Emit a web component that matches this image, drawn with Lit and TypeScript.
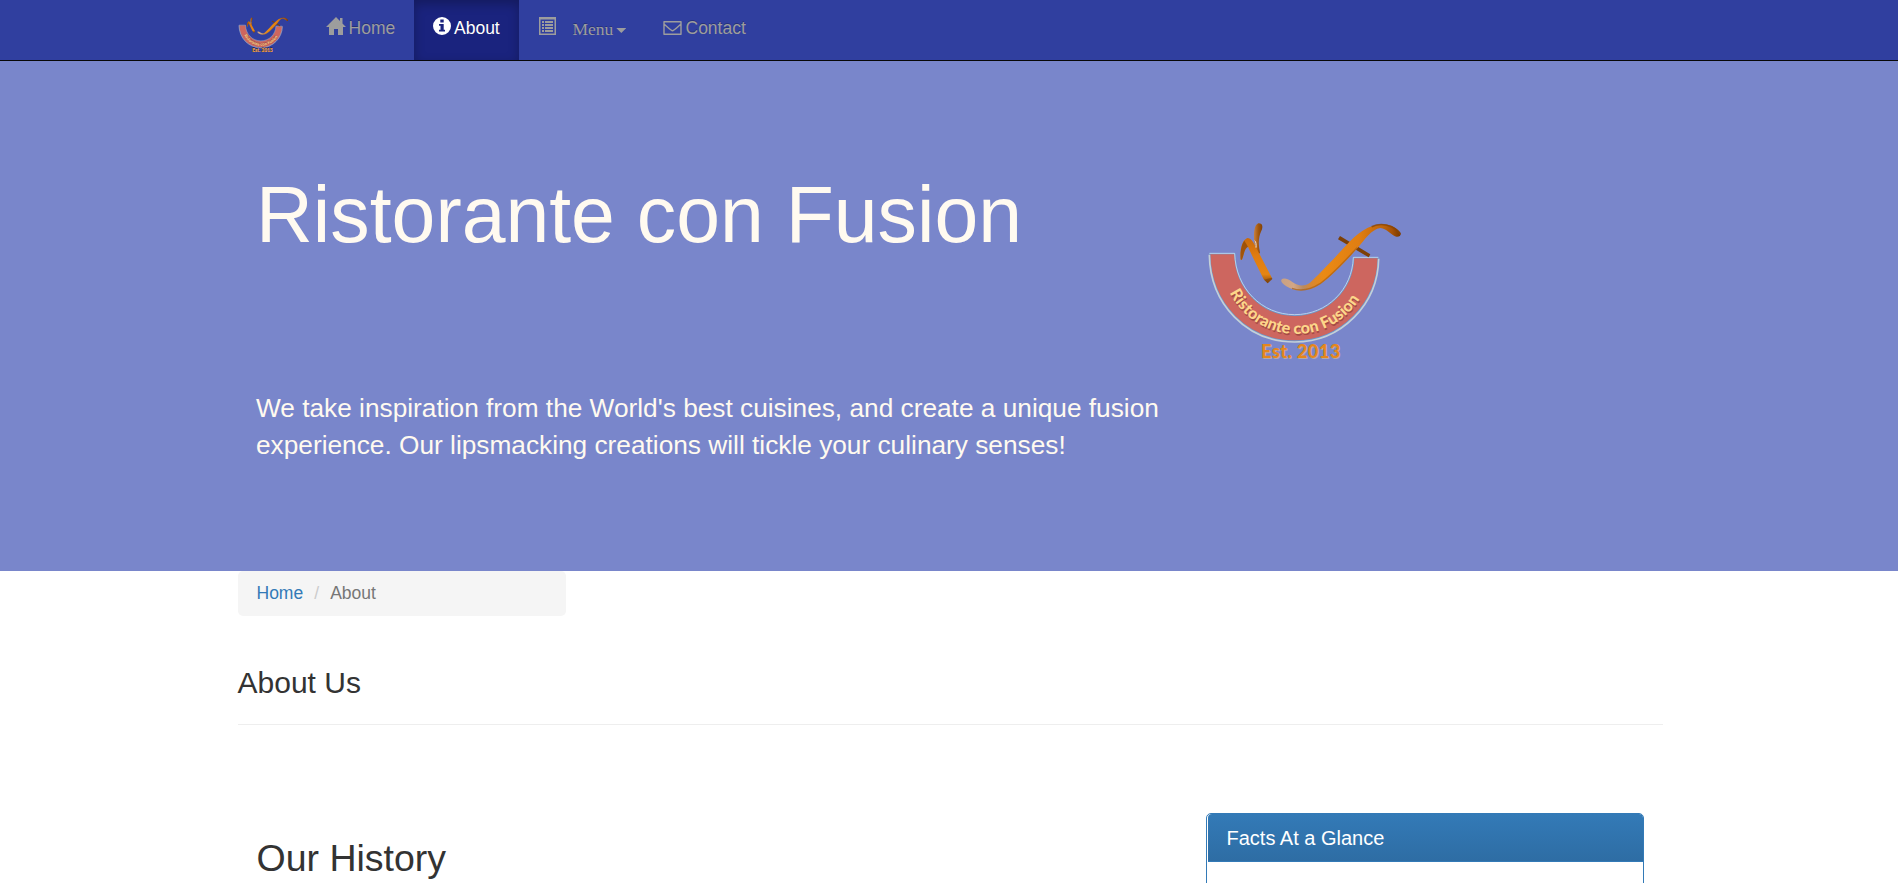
import { LitElement, html, css } from "lit";
import { customElement } from "lit/decorators.js";

@customElement("fusion-logo")
class FusionLogo extends LitElement {
  static styles = css`
    :host { display: block; }
    svg { display: block; width: 100%; height: 100%; }
    .est { font: 900 55px Lato, "Open Sans", sans-serif; }
    .ring { font: 900 48px Lato, "Open Sans", sans-serif; }
  `;
  render() {
    return html`<svg viewBox="0 0 690 480">
      <defs>
        <linearGradient id="gr" x1="0" y1="85" x2="0" y2="220" gradientUnits="userSpaceOnUse">
          <stop offset="0" stop-color="#c96a0c" /><stop offset=".4" stop-color="#e07c10" /><stop offset=".8" stop-color="#e58514" /><stop offset="1" stop-color="#8a4a0b" />
        </linearGradient>
        <linearGradient id="ga" x1="192" y1="0" x2="218" y2="0" gradientUnits="userSpaceOnUse">
          <stop offset="0" stop-color="#c9803c" /><stop offset=".5" stop-color="#a3570d" /><stop offset="1" stop-color="#7e4004" />
        </linearGradient>
        <linearGradient id="gf" x1="275" y1="0" x2="632" y2="0" gradientUnits="userSpaceOnUse">
          <stop offset="0" stop-color="#c9a184" /><stop offset=".1" stop-color="#d3a685" /><stop offset=".18" stop-color="#b98a5f" /><stop offset=".25" stop-color="#d88730" /><stop offset=".35" stop-color="#ea8a14" /><stop offset=".65" stop-color="#e07e12" /><stop offset=".85" stop-color="#bd650c" /><stop offset=".93" stop-color="#a45006" /><stop offset="1" stop-color="#743700" />
        </linearGradient>
        <path id="curve" d="M119 248 A224 224 0 0 0 527 232" />
      </defs>
      <path d="M59 131 H135 C136 235 215 316 314 316 C412 316 488 238 491 143 H565 C562 280 453 393 314 393 C172 393 62 282 59 131Z" fill="#cd665f" stroke="#6a96cc" stroke-width="4" />
      <path d="M58 134 C60 284 172 396 314 396 C455 396 564 282 566 146" fill="none" stroke="#c3d0d8" stroke-width="5" />
      <path d="M58 130 H134 C137 235 215 314 314 314 C412 314 487 238 490 142 H565" fill="none" stroke="#c8ddf2" stroke-width="2.5" />
      <text class="ring" fill="#7b322b" opacity=".5" transform="translate(2 5)"><textPath href="#curve" textLength="474" lengthAdjust="spacing">Ristorante con Fusion</textPath></text>
      <text class="ring" fill="#fdd68a"><textPath href="#curve" textLength="474" lengthAdjust="spacing">Ristorante con Fusion</textPath></text>
      <path d="M196 112 C188 76 192 44 205 40 C216 39 219 48 216 58 C207 78 203 94 210 128 L205 134Z" fill="url(#ga)" />
      <path d="M152 150 C149 120 156 90 172 84 C184 84 191 98 199 114 L247 206 L233 220 L221 208 C205 175 186 138 174 110 C162 116 162 138 155 150Z" fill="url(#gr)" />
      <path d="M174 110 C162 116 162 138 155 150 L152 148 C150 125 155 102 163 92Z" fill="#874509" opacity=".7" />
      <path d="M245 203 L247 207 L233 220 L222 209Z" fill="#6f3907" opacity=".5" />
      <path d="M194 92 C198 94 199 105 198 113" fill="none" stroke="#efe0d8" stroke-width="3" />
      <path d="M450 78 L541 133 L536 142 L444 88Z" fill="#7d4006" />
      <path d="M274 209 C280 202 296 207 308 217 C322 228 342 230 358 220 C378 203 438 139 466 109 C499 71 538 43 577 43 C604 43 623 56 632 69 C633 79 625 83 615 79 C600 71 590 56 571 54 C545 57 524 89 502 115 C470 151 424 200 390 223 C358 246 316 247 289 229 C278 222 272 216 274 209Z" fill="url(#gf)" />
      <path d="M306 235 C335 246 363 238 390 221 C424 196 465 153 501 113" fill="none" stroke="#a95f14" stroke-width="4" opacity=".7" />
      <path d="M545 50 C566 40 585 42 605 50 C619 58 629 67 630 74" fill="none" stroke="#8a4503" stroke-width="5" opacity=".8" />
      <text class="est" x="215" y="448" fill="#b5a9a8" textLength="238">Est. 2013</text>
      <text class="est" x="213" y="445" fill="#e5861c" textLength="238">Est. 2013</text>
    </svg>`;
  }
}

@customElement("app-root")
class AppRoot extends LitElement {
  static styles = css`
    :host { display: block; height: 883px; overflow: hidden; background: #fff; color: #333; font: 17.5px/25px "Liberation Sans", Arial, sans-serif; }
    * { box-sizing: border-box; }
    h1, h2, h3, p, ol { margin: 0; padding: 0; font-weight: 400; list-style: none; }
    a { text-decoration: none; color: inherit; }
    .nav { height: 61px; background: #303f9f; border-bottom: 1px solid #080808; padding-left: 234px; display: flex; color: #9d9d9d; text-shadow: 0 -1px 0 rgba(0,0,0,.25); }
    .brand { width: 73px; padding-top: 14px; }
    .brand fusion-logo { width: 59px; height: 41px; }
    .item { display: flex; padding: 15px 0 0 19px; height: 60px; white-space: nowrap; }
    .item svg { display: block; fill: currentColor; flex: none; }
    .item a { margin: 1px 0 0 2.6px; }
    .home { width: 107px; }
    .about { width: 105px; color: #fff; background: #1a237e; box-shadow: inset 0 4px 11px rgba(0,0,0,.25); }
    .about a { margin-left: 3px; }
    .menu { width: 125px; padding-left: 20px; }
    .menu a { font-family: "Liberation Serif", serif; margin: 2px 0 0 16.5px; }
    .contact a { margin-left: 3.5px; }
    .caret { margin: 13px 0 0 3px; width: 10px; height: 5px; background: currentColor; clip-path: polygon(0 0, 100% 0, 50% 100%); }
    .hero { height: 510px; background: #7986cb; color: floralwhite; padding: 111px 0 0 256px; display: grid; grid-template-columns: 934px 230px; align-content: start; }
    .hero h1 { font-size: 78.75px; line-height: 87px; white-space: nowrap; }
    .hero p { font-size: 26.25px; line-height: 37px; margin-top: 131px; width: 920px; }
    .hero fusion-logo { margin-top: 38px; width: 230px; height: 160px; }
    .page { margin-left: 238px; width: 1425px; }
    .crumbs { width: 328px; height: 45px; background: #f5f5f5; border-radius: 5px; padding: 10px 0 0 18.5px; display: flex; color: #777; }
    .crumbs a { color: #337ab7; }
    .sep { color: #ccc; width: 27px; padding-left: 11px; }
    .title { font-size: 30px; line-height: 33px; margin-top: 50px; padding-bottom: 25px; border-bottom: 1px solid #eee; text-indent: -.5px; }
    .cols { display: flex; justify-content: space-between; margin-top: 88px; padding: 0 19px 0 18.5px; }
    .cols h2 { font-size: 37.5px; line-height: 41px; margin-top: 25px; }
    .panel { width: 438px; height: 300px; border: 1px solid #337ab7; border-radius: 5px; padding-left: 1px; }
    .panel h3 { height: 48px; padding: 12px 0 0 18.5px; color: #fff; font-size: 20px; line-height: 24px; border-radius: 4px 4px 0 0; background: linear-gradient(#337ab7, #2e6da4); border-bottom: 1px solid #337ab7; }
  `;
  render() {
    return html`
      <nav class="nav">
        <a class="brand"><fusion-logo></fusion-logo></a>
        <div class="item home">
          <svg width="20" height="20" viewBox="0 0 20 20"><path d="M10 2 L20 12 H17 V20 H12 V14 H8 V20 H3 V12 H0Z M14 3 H16.5 V8.5 L14 6Z" /></svg>
          <a>Home</a>
        </div>
        <div class="item about">
          <svg width="18" height="20" viewBox="0 0 18 20"><path fill-rule="evenodd" d="M9 2a9 9 0 1 0 0 18A9 9 0 0 0 9 2Z M7.3 4.5h3.4v3H7.3z M6 9h4.7v5.7H12V16.5H6v-1.8h1.5v-4H6z" /></svg>
          <a>About</a>
        </div>
        <div class="item menu">
          <svg width="17" height="20" viewBox="0 0 17 20"><path fill-rule="evenodd" d="M0 2h17v18H0z M1.5 4.5v14h14v-14z" /><path d="M3 6h2v2H3zM6 6h8v2H6zM3 9h2v2H3zM6 9h8v2H6zM3 12h2v2H3zM6 12h8v2H6zM3 15h2v2H3zM6 15h8v2H6z" /></svg>
          <a>Menu</a><i class="caret"></i>
        </div>
        <div class="item contact">
          <svg width="19" height="20" viewBox="0 0 19 20"><path d="M1 6.7H18V19.2H1Z M1 9C4 11.5 8 15.7 9.5 15.7S15 11.5 18 9" fill="none" stroke="currentColor" stroke-width="1.4" stroke-linejoin="round" /></svg>
          <a>Contact</a>
        </div>
      </nav>
      <header class="hero">
        <div>
          <h1>Ristorante con Fusion</h1>
          <p>We take inspiration from the World's best cuisines, and create a unique fusion experience. Our lipsmacking creations will tickle your culinary senses!</p>
        </div>
        <fusion-logo></fusion-logo>
      </header>
      <main class="page">
        <ol class="crumbs"><li><a>Home</a></li><li class="sep">/</li><li>About</li></ol>
        <h3 class="title">About Us</h3>
        <div class="cols">
          <h2>Our History</h2>
          <section class="panel"><h3>Facts At a Glance</h3></section>
        </div>
      </main>`;
  }
}
